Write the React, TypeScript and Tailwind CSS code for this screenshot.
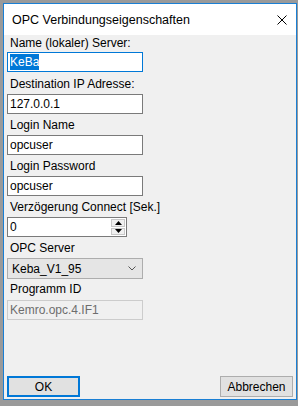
const font = "font-['Segoe_UI','Liberation_Sans',sans-serif]";

function Label({ text, mt }: { text: string; mt: string }) {
  return (
    <div className={`${mt} ml-[6px] h-[15px] leading-[15px] text-[12px] text-black whitespace-nowrap`}>
      {text}
    </div>
  );
}

function TextBox({ value, mt }: { value: string; mt: string }) {
  return (
    <div
      className={`${mt} ml-[3px] w-[136px] h-[20px] border border-[#7a7a7a] bg-white pl-[2px] text-[12px] leading-[18px] text-black`}
    >
      {value}
    </div>
  );
}

export default function App() {
  return (
    <div className={`w-[298px] h-[406px] bg-[#9a9a9a] pt-[3px] pl-[3px] ${font}`}>
      <div className="w-[294px] h-[397px] border border-[#1a7fd4] bg-[#f0f0f0] flex flex-col">
        <div className="h-[31px] bg-white flex items-center justify-between pl-[8px] pr-[9px]">
          <span className="text-[12.5px] text-black pt-[2px]">OPC Verbindungseigenschaften</span>
          <svg width="10" height="10" viewBox="0 0 10 10" className="mt-[1px]">
            <path d="M0.5 0.5 L9.5 9.5 M9.5 0.5 L0.5 9.5" stroke="#000" strokeWidth="1" />
          </svg>
        </div>

        <Label text="Name (lokaler) Server:" mt="mt-[1px]" />
        <div className="mt-[1px] ml-[3px] w-[136px] h-[20px] border border-[#0078d7] bg-white pl-[2px] pt-[1px] flex">
          <span className="bg-[#0078d7] text-white text-[12px] leading-[16px] h-[16px]">KeBa</span>
        </div>

        <Label text="Destination IP Adresse:" mt="mt-[5px]" />
        <TextBox value="127.0.0.1" mt="mt-[2px]" />

        <Label text="Login Name" mt="mt-[4px]" />
        <TextBox value="opcuser" mt="mt-[2px]" />

        <Label text="Login Password" mt="mt-[4px]" />
        <TextBox value="opcuser" mt="mt-[2px]" />

        <Label text="Verzögerung Connect [Sek.]" mt="mt-[4px]" />
        <div className="mt-[2px] ml-[3px] w-[120px] h-[20px] border border-[#7a7a7a] bg-white flex">
          <div className="flex-1 pl-[2px] text-[12px] leading-[18px] text-black">0</div>
          <div className="w-[15px] flex flex-col gap-[1px] py-[1px] pr-[1px]">
            <div className="flex-1 bg-[#f0f0f0] border border-[#c8c8c8] flex items-center justify-center">
              <svg width="7" height="4" viewBox="0 0 7 4">
                <path d="M3.5 0 L7 4 L0 4 Z" fill="#000" />
              </svg>
            </div>
            <div className="flex-1 bg-[#f0f0f0] border border-[#c8c8c8] flex items-center justify-center">
              <svg width="7" height="4" viewBox="0 0 7 4">
                <path d="M0 0 L7 0 L3.5 4 Z" fill="#000" />
              </svg>
            </div>
          </div>
        </div>

        <Label text="OPC Server" mt="mt-[4px]" />
        <div className="mt-[2px] ml-[3px] w-[136px] h-[21px] border border-[#adadad] bg-[#e5e5e5] flex items-center justify-between pl-[4px] pr-[6px]">
          <span className="text-[12px] text-black">Keba_V1_95</span>
          <svg width="8" height="5" viewBox="0 0 8 5">
            <path d="M0.5 0.5 L4 4 L7.5 0.5" stroke="#555" strokeWidth="1" fill="none" />
          </svg>
        </div>

        <Label text="Programm ID" mt="mt-[3px]" />
        <div className="mt-[3px] ml-[3px] w-[136px] h-[20px] border border-[#cccccc] bg-[#f0f0f0] pl-[2px] text-[12px] leading-[18px] text-[#6d6d6d]">
          Kemro.opc.4.IF1
        </div>

        <div className="flex-1" />

        <div className="flex justify-between ml-[3px] mr-[3px] mb-[2px]">
          <div className="w-[73px] h-[21px] border-2 border-[#0078d7] bg-[#e1e1e1] flex items-center justify-center text-[12px] text-black">
            OK
          </div>
          <div className="w-[73px] h-[21px] border border-[#adadad] bg-[#e1e1e1] flex items-center justify-center text-[12px] text-black">
            Abbrechen
          </div>
        </div>
      </div>
    </div>
  );
}
